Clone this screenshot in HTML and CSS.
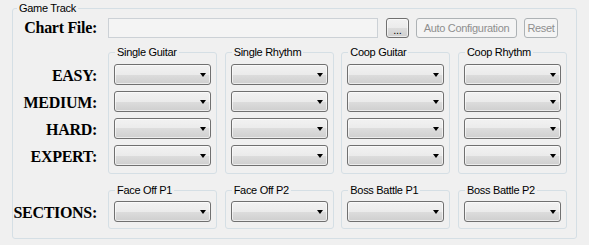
FILE: index.html
```html
<!DOCTYPE html>
<html lang="en">
<head>
    <meta charset="UTF-8">
    <title>Game Track</title>
    <link rel="stylesheet" href="styles.css">
</head>
<body>
    <fieldset class="track">
        <legend>Game Track</legend>

        <div class="file-row">
            <label class="big-label">Chart File:</label>
            <div class="textbox"></div>
            <button class="btn btn-browse">...</button>
            <button class="btn btn-auto" disabled>Auto Configuration</button>
            <button class="btn btn-reset" disabled>Reset</button>
        </div>

        <div class="section difficulties">
            <div class="labels">
                <div class="big-label">EASY:</div>
                <div class="big-label">MEDIUM:</div>
                <div class="big-label">HARD:</div>
                <div class="big-label">EXPERT:</div>
            </div>
            <div class="groups">
                <fieldset class="part">
                    <legend>Single Guitar</legend>
                    <div class="combo"></div>
                    <div class="combo"></div>
                    <div class="combo"></div>
                    <div class="combo"></div>
                </fieldset>
                <fieldset class="part">
                    <legend>Single Rhythm</legend>
                    <div class="combo"></div>
                    <div class="combo"></div>
                    <div class="combo"></div>
                    <div class="combo"></div>
                </fieldset>
                <fieldset class="part">
                    <legend>Coop Guitar</legend>
                    <div class="combo"></div>
                    <div class="combo"></div>
                    <div class="combo"></div>
                    <div class="combo"></div>
                </fieldset>
                <fieldset class="part">
                    <legend>Coop Rhythm</legend>
                    <div class="combo"></div>
                    <div class="combo"></div>
                    <div class="combo"></div>
                    <div class="combo"></div>
                </fieldset>
            </div>
        </div>

        <div class="section sections">
            <div class="labels">
                <div class="big-label">SECTIONS:</div>
            </div>
            <div class="groups">
                <fieldset class="part">
                    <legend>Face Off P1</legend>
                    <div class="combo"></div>
                </fieldset>
                <fieldset class="part">
                    <legend>Face Off P2</legend>
                    <div class="combo"></div>
                </fieldset>
                <fieldset class="part">
                    <legend>Boss Battle P1</legend>
                    <div class="combo"></div>
                </fieldset>
                <fieldset class="part">
                    <legend>Boss Battle P2</legend>
                    <div class="combo"></div>
                </fieldset>
            </div>
        </div>
    </fieldset>
</body>
</html>
```

FILE: styles.css
```css
* {
    box-sizing: border-box;
}

body {
    margin: 0;
    background: #f0f0f0;
    font-family: "Liberation Sans", Arial, sans-serif;
    font-size: 11px;
    letter-spacing: -0.3px;
    color: #000;
}

fieldset {
    margin: 0;
    min-width: 0;
    border: 1px solid #d5dfe5;
    border-radius: 3px;
}

legend {
    padding: 0 2px;
    line-height: 13px;
}

.track {
    width: 565px;
    margin: 2px 0 0 12px;
    padding: 0 0 9px 0;
}

.track > legend {
    margin-left: 4px;
}

.big-label {
    font-family: "Liberation Serif", "Times New Roman", serif;
    font-weight: bold;
    font-size: 16px;
    letter-spacing: -0.3px;
    color: #000;
    text-align: right;
}

.file-row {
    display: flex;
    align-items: center;
    margin-top: 3px;
    height: 20px;
}

.file-row .big-label {
    width: 84px;
    margin-right: 11px;
}

.textbox {
    width: 270px;
    height: 20px;
    border: 1px solid #ccd1d6;
    background: #f4f4f4;
    margin-right: 8px;
}

.btn {
    height: 20px;
    padding: 0;
    font-family: inherit;
    font-size: 11px;
    letter-spacing: -0.3px;
    border-radius: 3px;
}

.btn-browse {
    width: 23px;
    margin-right: 7px;
    border: 1px solid #707070;
    background: linear-gradient(#f2f2f2 0%, #ebebeb 50%, #dddddd 50%, #cfcfcf 100%);
    box-shadow: inset 0 0 0 1px rgba(255, 255, 255, 0.6);
    color: #000;
    line-height: 22px;
}

.btn:disabled {
    border: 1px solid #adb2b5;
    background: #f4f4f4;
    color: #8f8f8f;
}

.btn-auto {
    width: 101px;
    margin-right: 7px;
}

.btn-reset {
    width: 34px;
}

.section {
    display: flex;
    gap: 11px;
}

.difficulties {
    margin-top: 8px;
}

.sections {
    margin-top: 10px;
}

.labels {
    width: 84px;
    display: flex;
    flex-direction: column;
    gap: 6px;
    padding-top: 19px;
}

.sections .labels {
    padding-top: 18px;
}

.labels .big-label {
    height: 21px;
    line-height: 21px;
}

.groups {
    display: grid;
    grid-template-columns: repeat(4, 109px);
    column-gap: 7.67px;
}

.part {
    padding: 5px 5px 7px 5px;
    display: flex;
    flex-direction: column;
    gap: 6px;
}

.part > legend {
    margin-left: 1px;
}

.sections .part {
    padding: 4px 5px 6px 5px;
}

.combo {
    height: 21px;
    border: 1px solid #707070;
    border-radius: 3px;
    background: linear-gradient(#f2f2f2 0%, #ebebeb 50%, #dddddd 50%, #cfcfcf 100%);
    box-shadow: inset 0 0 0 1px rgba(255, 255, 255, 0.6);
    display: flex;
    justify-content: flex-end;
    align-items: center;
    padding: 1px 4px 0 0;
}

.combo::after {
    content: "";
    width: 0;
    height: 0;
    border-top: 4px solid #000;
    border-left: 3.5px solid transparent;
    border-right: 3.5px solid transparent;
}
```
